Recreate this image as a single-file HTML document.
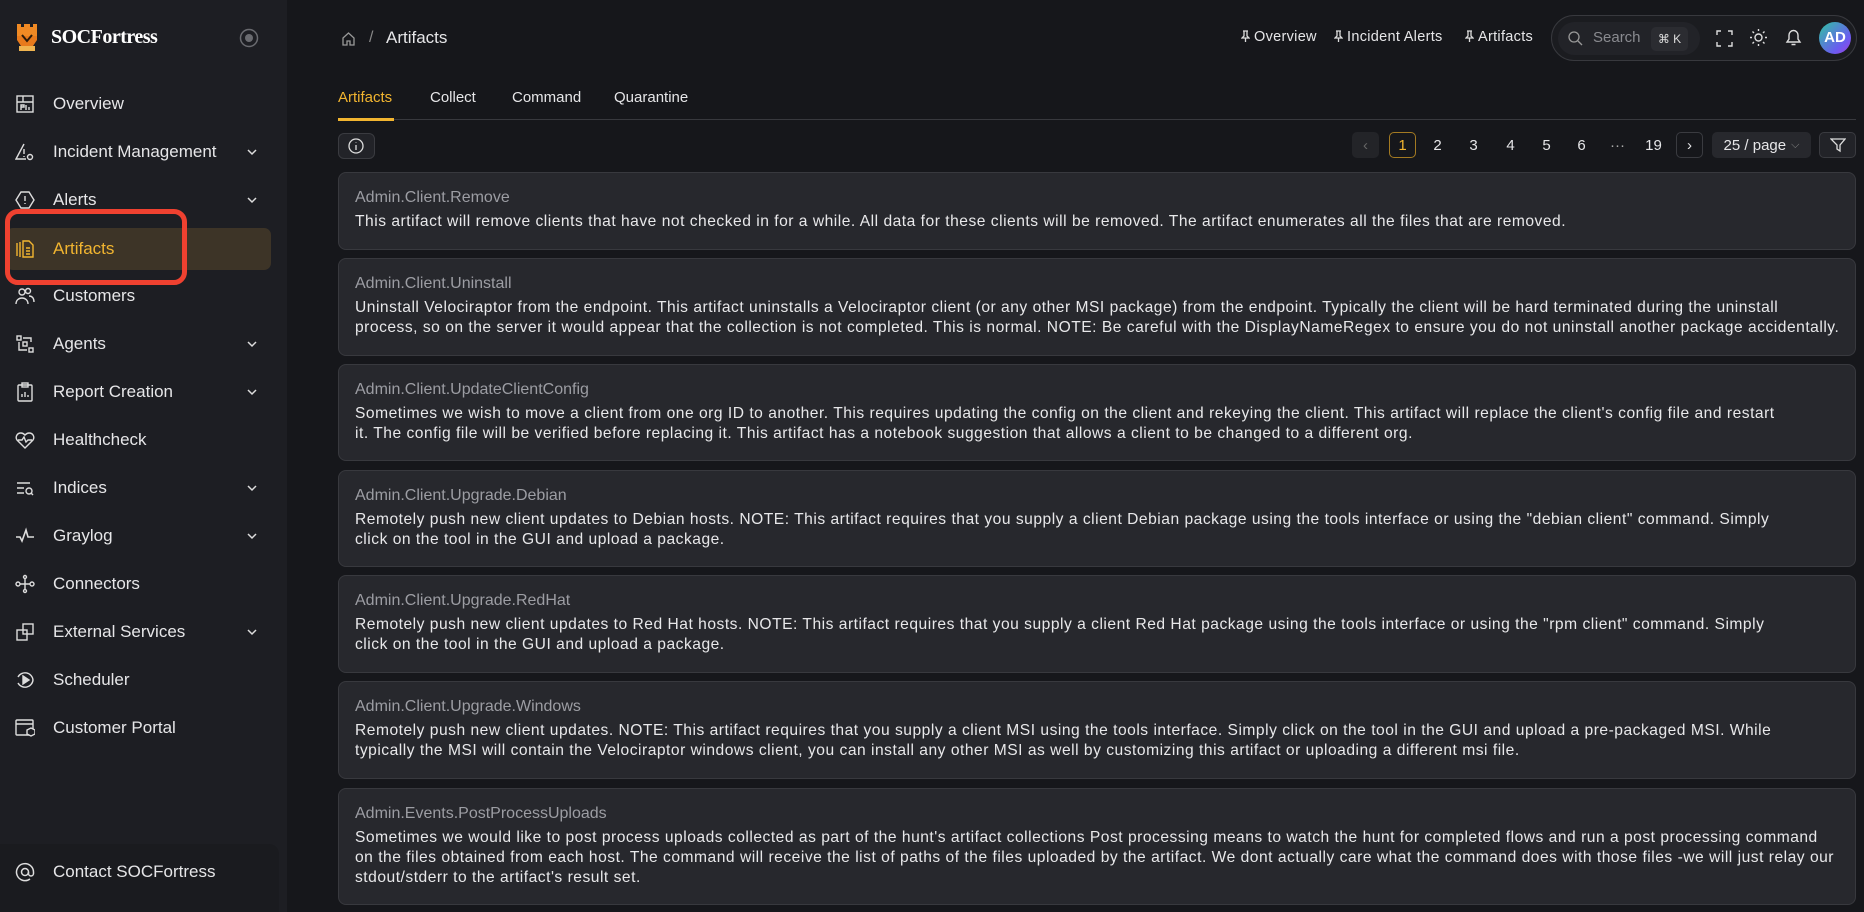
<!DOCTYPE html>
<html><head><meta charset="utf-8"><style>
*{box-sizing:border-box;margin:0;padding:0}
body{width:1864px;height:912px;background:#16171b;font-family:"Liberation Sans",sans-serif;color:#e6e6e8;position:relative;overflow:hidden}
.side{position:absolute;left:0;top:0;width:287px;height:912px;background:#1d1e23}
.logo{position:absolute;left:16px;top:22px}
.brand{position:absolute;left:51px;top:26px;font-family:"Liberation Serif",serif;font-weight:bold;font-size:20px;color:#fff;letter-spacing:-0.5px}
.nav{position:absolute;left:0;width:287px;height:42px;display:flex;align-items:center;font-size:17px;color:#e6e6e8}
.nav svg.ic{position:absolute;left:15px;width:20px;height:20px}
.nav span{position:absolute;left:53px}
.nav .chev{position:absolute;left:246px;width:12px;height:12px}
.active{background:#3d3427;border-radius:7px;left:6px;width:265px;color:#f2b530}
.active span{left:47px}.active svg.ic{left:9px}
.red{position:absolute;left:5px;top:209px;width:182px;height:76px;border:5px solid #ef4130;border-radius:13px}
.contact{position:absolute;left:0;top:844px;width:279px;height:68px;background:#1a1b1f;border-radius:0 10px 0 0}
.top{position:absolute;font-size:14px;color:#e6e6e8;white-space:nowrap}
.pin{display:inline-block;vertical-align:-1px;margin-right:4px}
.card{position:absolute;left:338px;width:1518px;background:#27282d;border:1px solid #38393e;border-radius:8px;padding:15px 16px 0 16px}
.card .t{font-size:16px;color:#9c9da3;line-height:20px}
.card .d{font-size:15.6px;color:#e8e8ea;line-height:20px;margin-top:4px;padding-right:55px;letter-spacing:0.51px}
.card .d.w{padding-right:0;margin-right:-6px}
.card .d.w2{padding-right:0}
.pg{position:absolute;top:132px;height:26px;font-size:15px;color:#e6e6e8;display:flex;align-items:center;justify-content:center}
</style></head><body>
<div class="side">
 <svg class="logo" width="22" height="30" viewBox="0 0 22 30"><path d="M1 2h4v3h3V2h6v3h3V2h4v12H1z" fill="#f08a24"/><path d="M1 14h20v4l-4 6H5l-4-6z" fill="#e87a1c"/><path d="M3 24h16v5H3z" fill="#f0b450"/><path d="M6 13l5 6 5-6" stroke="#2a1a0a" stroke-width="2" fill="none"/></svg>
 <div class="brand">SOCFortress</div>
 <svg style="position:absolute;left:239px;top:28px" width="20" height="20"><circle cx="10" cy="10" r="8.5" fill="none" stroke="#6a6b70" stroke-width="1.5"/><circle cx="10" cy="10" r="4" fill="#6a6b70"/></svg>

 <div class="nav" style="top:83px"><svg class="ic" viewBox="0 0 20 20" fill="none" stroke="#ddd" stroke-width="1.4"><rect x="2" y="2" width="16" height="16"/><path d="M2 8h16M8 2v6M6 16v-5h3v2H6M11 16v-5M14 16v-3"/></svg><span>Overview</span></div>
 <div class="nav" style="top:131px"><svg class="ic" viewBox="0 0 20 20" fill="none" stroke="#ddd" stroke-width="1.4"><path d="M9 2L1 17h10M9 7v5M9 14v1"/><circle cx="15" cy="15" r="2.5"/></svg><span>Incident Management</span><svg class="chev" viewBox="0 0 12 12"><path d="M2 4l4 4 4-4" stroke="#ddd" fill="none" stroke-width="1.5"/></svg></div>
 <div class="nav" style="top:179px"><svg class="ic" viewBox="0 0 20 20" fill="none" stroke="#ddd" stroke-width="1.4"><path d="M6 2h8l5 8-5 8H6l-5-8z"/><path d="M10 6v5M10 13v1"/></svg><span>Alerts</span><svg class="chev" viewBox="0 0 12 12"><path d="M2 4l4 4 4-4" stroke="#ddd" fill="none" stroke-width="1.5"/></svg></div>
 <div class="nav active" style="top:228px"><svg class="ic" viewBox="0 0 20 20" fill="none" stroke="#f2b530" stroke-width="1.4"><path d="M2 4v13M5 3v15M8 2h6l4 4v12H8z M11 9h4M11 12h4M11 15h4"/></svg><span>Artifacts</span></div>
 <div class="nav" style="top:275px"><svg class="ic" viewBox="0 0 20 20" fill="none" stroke="#ddd" stroke-width="1.4"><circle cx="7" cy="6" r="3"/><circle cx="13" cy="5" r="2.5"/><path d="M1 18c0-4 3-6 6-6s6 2 6 6M14 10c3 0 5 2 5 6"/></svg><span>Customers</span></div>
 <div class="nav" style="top:323px"><svg class="ic" viewBox="0 0 20 20" fill="none" stroke="#ddd" stroke-width="1.4"><rect x="2" y="2" width="4" height="4"/><rect x="8" y="8" width="4" height="4"/><rect x="14" y="14" width="4" height="4"/><path d="M8 4h8v4M4 8v8h8"/></svg><span>Agents</span><svg class="chev" viewBox="0 0 12 12"><path d="M2 4l4 4 4-4" stroke="#ddd" fill="none" stroke-width="1.5"/></svg></div>
 <div class="nav" style="top:371px"><svg class="ic" viewBox="0 0 20 20" fill="none" stroke="#ddd" stroke-width="1.4"><rect x="3" y="3" width="14" height="16" rx="1"/><rect x="7" y="1" width="6" height="4"/><path d="M7 15v-3M10 15v-5M13 15v-2"/></svg><span>Report Creation</span><svg class="chev" viewBox="0 0 12 12"><path d="M2 4l4 4 4-4" stroke="#ddd" fill="none" stroke-width="1.5"/></svg></div>
 <div class="nav" style="top:419px"><svg class="ic" viewBox="0 0 20 20" fill="none" stroke="#ddd" stroke-width="1.4"><path d="M10 18L2 10C0 7 2 3 6 3c2 0 3 1 4 2 1-1 2-2 4-2 4 0 6 4 4 7z"/><path d="M3 10h4l2-3 2 5 2-2h4"/></svg><span>Healthcheck</span></div>
 <div class="nav" style="top:467px"><svg class="ic" viewBox="0 0 20 20" fill="none" stroke="#ddd" stroke-width="1.4"><path d="M2 5h13M2 10h7M2 15h7"/><circle cx="14" cy="13" r="3"/><path d="M16 15l2 2"/></svg><span>Indices</span><svg class="chev" viewBox="0 0 12 12"><path d="M2 4l4 4 4-4" stroke="#ddd" fill="none" stroke-width="1.5"/></svg></div>
 <div class="nav" style="top:515px"><svg class="ic" viewBox="0 0 20 20" fill="none" stroke="#ddd" stroke-width="1.6"><path d="M1 11h4l2 4 4-11 2 7h6"/></svg><span>Graylog</span><svg class="chev" viewBox="0 0 12 12"><path d="M2 4l4 4 4-4" stroke="#ddd" fill="none" stroke-width="1.5"/></svg></div>
 <div class="nav" style="top:563px"><svg class="ic" viewBox="0 0 20 20" fill="none" stroke="#ddd" stroke-width="1.4"><circle cx="3" cy="10" r="2"/><circle cx="17" cy="10" r="2"/><circle cx="10" cy="3" r="1.5"/><circle cx="10" cy="17" r="1.5"/><path d="M5 10h10M10 4v12"/></svg><span>Connectors</span></div>
 <div class="nav" style="top:611px"><svg class="ic" viewBox="0 0 20 20" fill="none" stroke="#ddd" stroke-width="1.4"><rect x="2" y="8" width="10" height="10"/><rect x="8" y="2" width="10" height="10"/></svg><span>External Services</span><svg class="chev" viewBox="0 0 12 12"><path d="M2 4l4 4 4-4" stroke="#ddd" fill="none" stroke-width="1.5"/></svg></div>
 <div class="nav" style="top:659px"><svg class="ic" viewBox="0 0 20 20" fill="none" stroke="#ddd" stroke-width="1.4"><path d="M3 7a8 8 0 0 1 15 3 8 8 0 0 1-15 3"/><path d="M8 6l6 4-6 4z" fill="#ddd"/></svg><span>Scheduler</span></div>
 <div class="nav" style="top:707px"><svg class="ic" viewBox="0 0 20 20" fill="none" stroke="#ddd" stroke-width="1.4"><rect x="1" y="2" width="17" height="15" rx="1"/><path d="M1 6h17"/><path d="M12 12l4-2 4 2v4l-4 2-4-2z" fill="#1d1e23"/></svg><span>Customer Portal</span></div>
 <div class="red"></div>
 <div class="contact"></div>
 <div class="nav" style="top:851px"><svg class="ic" viewBox="0 0 20 20" fill="none" stroke="#ddd" stroke-width="1.5"><circle cx="10" cy="10" r="3.5"/><path d="M13.5 10v1.5a2.5 2.5 0 0 0 5 0V10a8.5 8.5 0 1 0-3.5 7"/></svg><span>Contact SOCFortress</span></div>
</div>

<!-- top bar -->
<svg style="position:absolute;left:341px;top:31px" width="15" height="15" viewBox="0 0 15 15" fill="none" stroke="#999" stroke-width="1.3"><path d="M2 7l5.5-5 5.5 5v7H9v-4H6v4H2z"/></svg>
<div class="top" style="left:369px;top:29px;color:#888;font-size:16px">/</div>
<div class="top" style="left:386px;top:28px;font-size:17px">Artifacts</div>
<div class="top" style="left:1241px;top:29px;font-size:14.5px;letter-spacing:0.3px"><svg class="pin" width="9" height="12" fill="none" stroke="#ddd" stroke-width="1.3"><path d="M2 1h5M3 1v5L1 8h7L6 6V1M4.5 8v4"/></svg>Overview</div>
<div class="top" style="left:1334px;top:29px;font-size:14.5px;letter-spacing:0.3px"><svg class="pin" width="9" height="12" fill="none" stroke="#ddd" stroke-width="1.3"><path d="M2 1h5M3 1v5L1 8h7L6 6V1M4.5 8v4"/></svg>Incident Alerts</div>
<div class="top" style="left:1465px;top:29px;font-size:14.5px;letter-spacing:0.3px"><svg class="pin" width="9" height="12" fill="none" stroke="#ddd" stroke-width="1.3"><path d="M2 1h5M3 1v5L1 8h7L6 6V1M4.5 8v4"/></svg>Artifacts</div>
<div style="position:absolute;left:1551px;top:15px;width:306px;height:46px;border:1px solid #38393e;border-radius:23px;background:#1b1c20"></div>
<div style="position:absolute;left:1558px;top:22px;width:142px;height:33px;border-radius:17px;background:#222328"></div>
<svg style="position:absolute;left:1568px;top:31px" width="15" height="15" fill="none" stroke="#999" stroke-width="1.3"><circle cx="6" cy="6" r="5"/><path d="M10 10l4 4"/></svg>
<div class="top" style="left:1593px;top:29px;color:#8a8b90;font-size:15px">Search</div>
<div style="position:absolute;left:1651px;top:27px;width:37px;height:24px;border-radius:5px;background:#2b2c31;color:#ddd;font-size:12px;line-height:24px;text-align:center">⌘ K</div>
<svg style="position:absolute;left:1716px;top:30px" width="17" height="17" fill="none" stroke="#ddd" stroke-width="1.4"><path d="M1 5V1h4M12 1h4v4M16 12v4h-4M5 16H1v-4"/></svg>
<svg style="position:absolute;left:1749px;top:28px" width="19" height="19" fill="none" stroke="#ddd" stroke-width="1.4"><circle cx="9.5" cy="9.5" r="3.5"/><path d="M9.5 1v2M9.5 16v2M1 9.5h2M16 9.5h2M3.5 3.5l1.5 1.5M14 14l1.5 1.5M3.5 15.5L5 14M14 5l1.5-1.5"/></svg>
<svg style="position:absolute;left:1785px;top:28px" width="17" height="19" fill="none" stroke="#ddd" stroke-width="1.4"><path d="M2 14h13l-2-3V7a4.5 4.5 0 0 0-9 0v4z M6.5 16.5h4"/></svg>
<div style="position:absolute;left:1819px;top:22px;width:32px;height:32px;border-radius:50%;background:linear-gradient(135deg,#2ec4a0,#6a5cf0 70%,#a040e0);color:#fff;font-size:15px;font-weight:bold;line-height:32px;text-align:center">AD</div>

<!-- tabs -->
<div class="top" style="left:338px;top:89px;color:#f2b530;font-size:15px">Artifacts</div>
<div class="top" style="left:430px;top:89px;font-size:15px">Collect</div>
<div class="top" style="left:512px;top:89px;font-size:15px">Command</div>
<div class="top" style="left:614px;top:89px;font-size:15px">Quarantine</div>
<div style="position:absolute;left:338px;top:119px;width:1518px;height:1px;background:#38393e"></div>
<div style="position:absolute;left:338px;top:118px;width:56px;height:3px;background:#f2b530"></div>

<div style="position:absolute;left:338px;top:133px;width:37px;height:26px;border:1px solid #3a3b40;border-radius:6px;background:#222328"></div>
<svg style="position:absolute;left:348px;top:138px" width="16" height="16" fill="none" stroke="#ddd" stroke-width="1.3"><circle cx="8" cy="8" r="7"/><path d="M8 7v5M8 4.5v.5"/></svg>

<!-- pagination -->
<div class="pg" style="left:1352px;width:27px;background:#232428;border-radius:5px;color:#666">‹</div>
<div class="pg" style="left:1389px;width:27px;border:1px solid #a37a22;border-radius:5px;color:#f2b530">1</div>
<div class="pg" style="left:1424px;width:27px">2</div>
<div class="pg" style="left:1460px;width:27px">3</div>
<div class="pg" style="left:1497px;width:27px">4</div>
<div class="pg" style="left:1533px;width:27px">5</div>
<div class="pg" style="left:1568px;width:27px">6</div>
<div class="pg" style="left:1604px;width:27px;color:#aaa">···</div>
<div class="pg" style="left:1640px;width:27px">19</div>
<div class="pg" style="left:1676px;width:27px;border:1px solid #3a3b40;border-radius:5px">›</div>
<div class="pg" style="left:1712px;width:99px;background:#27282d;border-radius:5px">25 / page <span style="color:#888;font-size:11px;margin-left:5px">⌵</span></div>
<div class="pg" style="left:1819px;width:37px;border:1px solid #3a3b40;border-radius:5px;background:#222328"><svg width="16" height="16" fill="none" stroke="#ddd" stroke-width="1.3"><path d="M1 2h14l-5 6v6l-3-2V8z"/></svg></div>

<!-- cards -->
<div class="card" style="top:172px;height:78px"><div class="t">Admin.Client.Remove</div><div class="d">This artifact will remove clients that have not checked in for a while. All data for these clients will be removed. The artifact enumerates all the files that are removed.</div></div>
<div class="card" style="top:258px;height:98px"><div class="t">Admin.Client.Uninstall</div><div class="d w">Uninstall Velociraptor from the endpoint. This artifact uninstalls a Velociraptor client (or any other MSI package) from the endpoint. Typically the client will be hard terminated during the uninstall process, so on the server it would appear that the collection is not completed. This is normal. NOTE: Be careful with the DisplayNameRegex to ensure you do not uninstall another package accidentally.</div></div>
<div class="card" style="top:364px;height:97px"><div class="t">Admin.Client.UpdateClientConfig</div><div class="d">Sometimes we wish to move a client from one org ID to another. This requires updating the config on the client and rekeying the client. This artifact will replace the client's config file and restart it. The config file will be verified before replacing it. This artifact has a notebook suggestion that allows a client to be changed to a different org.</div></div>
<div class="card" style="top:470px;height:97px"><div class="t">Admin.Client.Upgrade.Debian</div><div class="d">Remotely push new client updates to Debian hosts. NOTE: This artifact requires that you supply a client Debian package using the tools interface or using the "debian client" command. Simply click on the tool in the GUI and upload a package.</div></div>
<div class="card" style="top:575px;height:98px"><div class="t">Admin.Client.Upgrade.RedHat</div><div class="d">Remotely push new client updates to Red Hat hosts. NOTE: This artifact requires that you supply a client Red Hat package using the tools interface or using the "rpm client" command. Simply click on the tool in the GUI and upload a package.</div></div>
<div class="card" style="top:681px;height:98px"><div class="t">Admin.Client.Upgrade.Windows</div><div class="d">Remotely push new client updates. NOTE: This artifact requires that you supply a client MSI using the tools interface. Simply click on the tool in the GUI and upload a pre-packaged MSI. While typically the MSI will contain the Velociraptor windows client, you can install any other MSI as well by customizing this artifact or uploading a different msi file.</div></div>
<div class="card" style="top:788px;height:117px"><div class="t">Admin.Events.PostProcessUploads</div><div class="d w2">Sometimes we would like to post process uploads collected as part of the hunt's artifact collections Post processing means to watch the hunt for completed flows and run a post processing command on the files obtained from each host. The command will receive the list of paths of the files uploaded by the artifact. We dont actually care what the command does with those files -we will just relay our stdout/stderr to the artifact's result set.</div></div>
</body></html>
